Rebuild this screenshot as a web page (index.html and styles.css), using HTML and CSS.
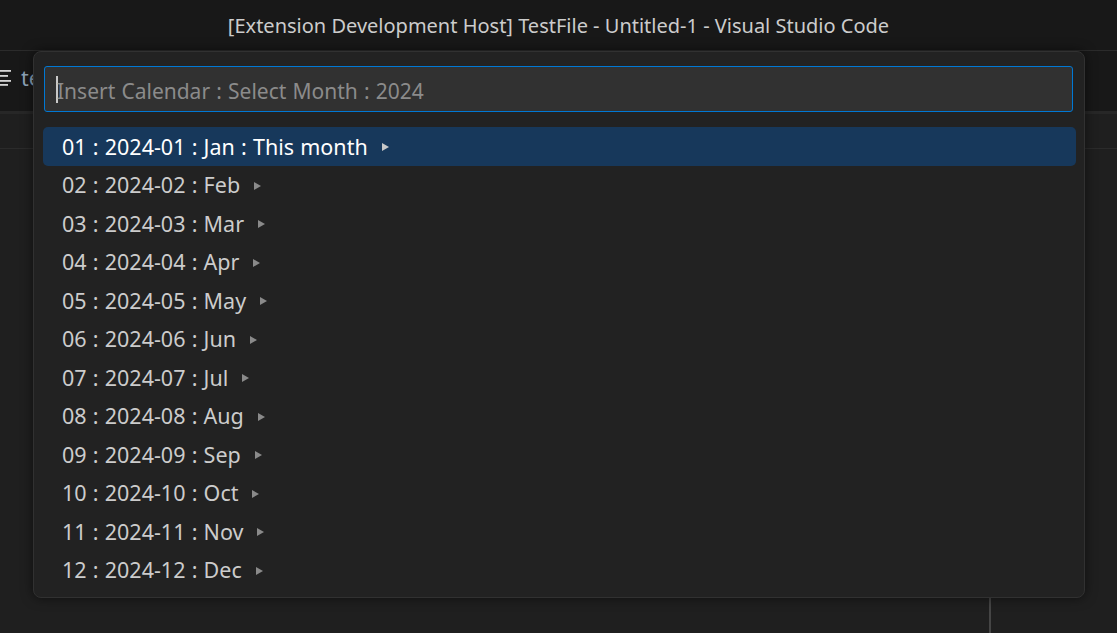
FILE: index.html
```html
<!DOCTYPE html>
<html lang="en">
<head>
<meta charset="utf-8">
<title>Insert Calendar</title>
<link rel="stylesheet" href="styles.css">
</head>
<body>
<div class="window">
  <header class="titlebar">[Extension Development Host] TestFile - Untitled-1 - Visual Studio Code</header>
  <div class="tabbar">
    <div class="tab">
      <svg class="tab-icon" width="12" height="18" viewBox="0 0 12 18">
        <rect x="0" y="2" width="11" height="1.8" fill="#d4d4d4"/>
        <rect x="0" y="7" width="8" height="1.8" fill="#d4d4d4"/>
        <rect x="0" y="12" width="11" height="1.8" fill="#d4d4d4"/>
        <rect x="0" y="16" width="8" height="1.8" fill="#d4d4d4"/>
      </svg>
      <span class="tab-label">te</span>
    </div>
  </div>
  <div class="breadcrumbs"></div>
  <div class="editor">
    <div class="editor-main"></div>
    <div class="editor-side"></div>
  </div>

  <div class="quickpick">
    <div class="qp-input">
      <span class="caret"></span><span class="placeholder">Insert Calendar : Select Month : 2024</span>
    </div>
    <ul class="qp-list">
      <li class="qp-item selected"><span>01 : 2024-01 : Jan : This month</span><i class="arrow"></i></li>
      <li class="qp-item"><span>02 : 2024-02 : Feb</span><i class="arrow"></i></li>
      <li class="qp-item"><span>03 : 2024-03 : Mar</span><i class="arrow"></i></li>
      <li class="qp-item"><span>04 : 2024-04 : Apr</span><i class="arrow"></i></li>
      <li class="qp-item"><span>05 : 2024-05 : May</span><i class="arrow"></i></li>
      <li class="qp-item"><span>06 : 2024-06 : Jun</span><i class="arrow"></i></li>
      <li class="qp-item"><span>07 : 2024-07 : Jul</span><i class="arrow"></i></li>
      <li class="qp-item"><span>08 : 2024-08 : Aug</span><i class="arrow"></i></li>
      <li class="qp-item"><span>09 : 2024-09 : Sep</span><i class="arrow"></i></li>
      <li class="qp-item"><span>10 : 2024-10 : Oct</span><i class="arrow"></i></li>
      <li class="qp-item"><span>11 : 2024-11 : Nov</span><i class="arrow"></i></li>
      <li class="qp-item"><span>12 : 2024-12 : Dec</span><i class="arrow"></i></li>
    </ul>
  </div>
</div>
</body>
</html>
```

FILE: styles.css
```css
* { box-sizing: border-box; }
html, body {
  margin: 0;
  padding: 0;
  height: 100%;
  background: #1f1f1f;
  font-family: "Noto Sans", "Open Sans", sans-serif;
  overflow: hidden;
}
.window {
  position: relative;
  height: 633px;
  display: flex;
  flex-direction: column;
}
.titlebar {
  height: 51px;
  flex: none;
  background: #181818;
  border-bottom: 1px solid #2b2b2b;
  color: #cccccc;
  font-size: 20px;
  display: flex;
  align-items: center;
  justify-content: center;
}
.tabbar {
  height: 63px;
  flex: none;
  background: #181818;
  border-bottom: 3px solid #272727;
  display: flex;
  align-items: center;
  padding-bottom: 8px;
}
.tab {
  display: flex;
  align-items: center;
  gap: 9px;
}
.tab-icon { display: block; }
.tab-label {
  color: #8ea3b8;
  font-size: 21.5px;
}
.breadcrumbs {
  height: 35px;
  flex: none;
  background: #1f1f1f;
  border-bottom: 1px solid #2b2b2b;
}
.editor {
  flex: 1;
  display: flex;
}
.editor-main { width: 989px; flex: none; }
.editor-side {
  flex: 1;
  border-left: 2px solid #454545;
}

.quickpick {
  position: absolute;
  left: 33px;
  top: 51px;
  width: 1052px;
  height: 547px;
  background: #222222;
  border: 1px solid #313131;
  border-radius: 8px;
  box-shadow: 0 0 12px rgba(0, 0, 0, 0.55);
  padding: 14px 11px 7px 9px;
  display: flex;
  flex-direction: column;
  gap: 15px;
}
.qp-input {
  margin-left: 1px;
  width: 1029px;
  height: 46px;
  background: #313131;
  border: 1px solid #0078d4;
  border-radius: 3px;
  display: flex;
  align-items: center;
  padding-left: 11px;
  padding-top: 3px;
}
.caret {
  display: inline-block;
  width: 2px;
  height: 27px;
  background: #c8c8c8;
  margin-right: -1px;
  margin-top: -3px;
}
.placeholder {
  color: #8b8b8b;
  font-size: 21px;
  word-spacing: 0.7px;
}
.qp-list {
  list-style: none;
  margin: 0;
  padding: 0;
  width: 1033px;
}
.qp-item {
  height: 38.5px;
  display: flex;
  align-items: center;
  padding-left: 19px;
  color: #cccccc;
  font-size: 21.5px;
  word-spacing: 0.6px;
  border-radius: 5px;
}
.qp-item.selected {
  background: #17385b;
  color: #ffffff;
}
.arrow {
  display: inline-block;
  margin-left: 14px;
  width: 0;
  height: 0;
  border-top: 4px solid transparent;
  border-bottom: 4px solid transparent;
  border-left: 7px solid #8a8a8a;
  margin-top: 2px;
}
.qp-item.selected .arrow { border-left-color: #c8c8c8; }
```
